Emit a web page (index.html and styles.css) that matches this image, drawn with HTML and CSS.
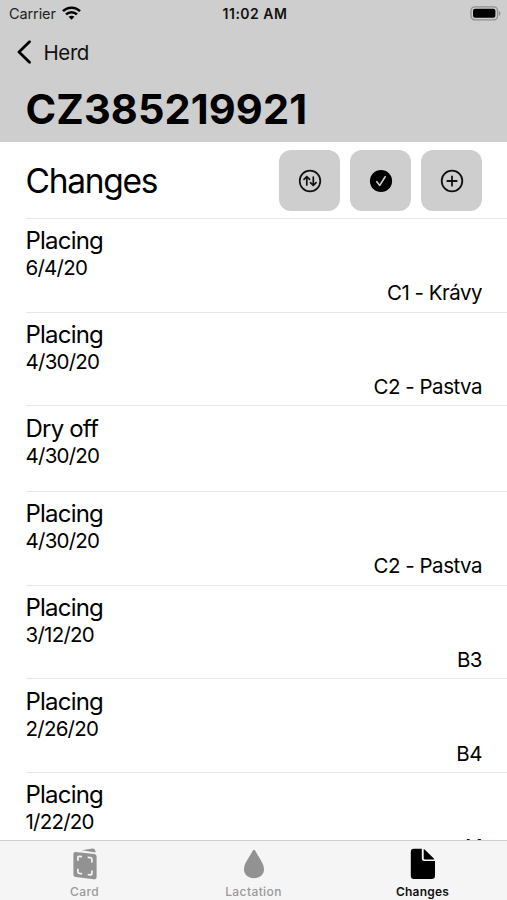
FILE: index.html
```html
<!DOCTYPE html>
<html lang="en">
<head>
    <meta charset="UTF-8">
    <meta name="viewport" content="width=device-width, initial-scale=1.0">
    <title>CZ385219921</title>
    <link rel="stylesheet" href="styles.css">
</head>
<body>
    <header class="header">
        <div class="status-bar">
            <div class="carrier">
                <span>Carrier</span>
                <svg class="wifi" width="19" height="14" viewBox="0 0 19 14" fill="none" stroke="#000" stroke-width="2.5">
                    <path d="M1 5.2C5.6.5 13.4.5 18 5.2"/>
                    <path d="M4 8.4c3.1-3 7.9-3 11 0"/>
                    <path d="M9.5 13.7 6.6 10.8c1.6-1.5 4.2-1.5 5.8 0z" fill="#000" stroke="none"/>
                </svg>
            </div>
            <div class="time">11:02 AM</div>
            <svg class="battery" width="31" height="15" viewBox="0 0 31 15">
                <rect x="1" y=".8" width="26.6" height="13" rx="3.8" fill="none" stroke="#8e8e8e" stroke-width="1.3"/>
                <rect x="3" y="2.8" width="22.4" height="9" rx="2" fill="#000"/>
                <path d="M29 5v4.8c1.9-.8 1.9-4 0-4.8z" fill="#8e8e8e"/>
            </svg>
        </div>
        <a class="back">
            <svg width="15" height="24" viewBox="0 0 15 24" fill="none" stroke="#000" stroke-width="2.8" stroke-linecap="round" stroke-linejoin="round">
                <path d="M12.5 1.8 2 12l10.5 10.2"/>
            </svg>
            <span>Herd</span>
        </a>
        <h1>CZ385219921</h1>
    </header>

    <main class="content">
        <div class="toolbar">
            <h2>Changes</h2>
            <div class="actions">
                <button class="action">
                    <svg width="24" height="24" viewBox="0 0 24 24" fill="none" stroke="#111" stroke-width="1.7" stroke-linecap="round" stroke-linejoin="round">
                        <circle cx="12" cy="12" r="10.3"/>
                        <path d="M8.8 16V7.8M6 10.3l2.8-2.8 2.8 2.8"/>
                        <path d="M15.3 8v8.2M12.5 13.7l2.8 2.8 2.8-2.8"/>
                    </svg>
                </button>
                <button class="action">
                    <svg width="24" height="24" viewBox="0 0 24 24" fill="none">
                        <circle cx="12" cy="12" r="11.1" fill="#000"/>
                        <path d="M7.8 12.7l3 3.7 5.4-8.6" stroke="#cecece" stroke-width="1.6" stroke-linecap="round" stroke-linejoin="round"/>
                    </svg>
                </button>
                <button class="action">
                    <svg width="24" height="24" viewBox="0 0 24 24" fill="none" stroke="#111" stroke-width="1.8" stroke-linecap="round">
                        <circle cx="12" cy="12" r="10.3"/>
                        <path d="M12 7.3v9.4M7.3 12h9.4"/>
                    </svg>
                </button>
            </div>
        </div>

        <div class="change">
            <div class="name">Placing</div>
            <div class="date">6/4/20</div>
            <div class="place">C1 - Krávy</div>
        </div>
        <div class="change">
            <div class="name">Placing</div>
            <div class="date">4/30/20</div>
            <div class="place">C2 - Pastva</div>
        </div>
        <div class="change short">
            <div class="name">Dry off</div>
            <div class="date">4/30/20</div>
        </div>
        <div class="change">
            <div class="name">Placing</div>
            <div class="date">4/30/20</div>
            <div class="place">C2 - Pastva</div>
        </div>
        <div class="change">
            <div class="name">Placing</div>
            <div class="date">3/12/20</div>
            <div class="place">B3</div>
        </div>
        <div class="change">
            <div class="name">Placing</div>
            <div class="date">2/26/20</div>
            <div class="place">B4</div>
        </div>
        <div class="change">
            <div class="name">Placing</div>
            <div class="date">1/22/20</div>
            <div class="place">A1</div>
        </div>
    </main>

    <nav class="tabs">
        <a class="tab">
            <svg width="26" height="32" viewBox="0 0 26 32">
                <path d="M10 2.3 20.5.5c1.6-.2 2.6.8 2.8 2.2l.3 1.9z" fill="#929292"/>
                <path d="M3.8 4 22 6.1c1.6.2 2.6 1.2 2.6 2.8v19.8c0 2-1.2 2.9-3 2.6L4 29c-1.7-.3-2.6-1.2-2.6-2.8V6.2C1.4 4.6 2.3 3.8 3.8 4z" fill="#929292"/>
                <path d="M5.9 12.8V9.7c0-1 .5-1.5 1.5-1.4l2.6.3M15.7 9.3l2.6.3c1 .1 1.6.8 1.6 1.8v3.2M5.9 20.8v2.9c0 1 .5 1.5 1.5 1.7l2.6.4M15.7 26.5l2.6.3c1 .1 1.6-.4 1.6-1.4v-3" fill="none" stroke="#f5f5f5" stroke-width="1.7"/>
            </svg>
            <span>Card</span>
        </a>
        <a class="tab">
            <svg width="22" height="32" viewBox="0 0 22 32">
                <path d="M11 1.8c.5 0 .8.3 1.1.8C15.2 8.7 21 15.3 21 21.2c0 5.4-4.3 9-10 9s-10-3.600-10-9C1 15.3 6.8 8.7 9.9 2.6c.3-.5.6-.8 1.1-.8z" fill="#929292"/>
            </svg>
            <span>Lactation</span>
        </a>
        <a class="tab active">
            <svg width="26" height="32" viewBox="0 0 26 32">
                <path d="M4 .7h7.800v9.800c0 1.500.9 2.400 2.400 2.400H25v14.800c0 2.200-1.100 3.300-3.300 3.300H4C1.800 31 .8 29.900.8 27.700V4C.8 1.800 1.800.7 4 .7z"/>
                <path d="M13.700 1c.6.200 1.100.6 1.700 1.200l7.700 7.600c.6.600 1 1 1.300 1.600H14.800c-.8 0-1.100-.4-1.100-1.100z"/>
            </svg>
            <span>Changes</span>
        </a>
    </nav>
</body>
</html>
```

FILE: styles.css
```css
* {
    box-sizing: border-box;
}
body {
    margin: 0;
    height: 900px;
    display: flex;
    flex-direction: column;
    overflow: hidden;
    background-color: #fff;
    color: #000;
    font-family: Inter, "Liberation Sans", sans-serif;
}
.header {
    flex: none;
    height: 142px;
    background-color: #cecece;
}
.status-bar {
    height: 28px;
    padding: 0 6px 0 9px;
    display: grid;
    grid-template-columns: 1fr auto 1fr;
    align-items: center;
}
.carrier {
    display: flex;
    align-items: center;
    gap: 6px;
    margin-top: -1px;
    font-size: 14.5px;
    letter-spacing: -0.1px;
    color: #222;
}
.wifi {
    margin-top: -2px;
}
.time {
    margin-top: -1px;
    font-size: 14px;
    font-weight: 600;
    letter-spacing: 0.5px;
    color: #111;
}
.battery {
    justify-self: end;
    margin-top: -1px;
}
.back {
    display: flex;
    align-items: center;
    gap: 11.5px;
    height: 48px;
    padding-left: 17px;
    font-size: 20.5px;
    letter-spacing: -0.4px;
    color: #111;
}
h1 {
    margin: 0;
    padding-left: 25.5px;
    font-size: 41.5px;
    line-height: 66px;
    font-weight: 700;
    letter-spacing: 0.1px;
}
.content {
    flex: 1;
    min-height: 0;
    overflow: hidden;
    padding-left: 25.5px;
}
.toolbar {
    display: flex;
    justify-content: space-between;
    height: 76px;
    padding: 8px 25px 0 0;
}
h2 {
    margin: 0;
    font-size: 33.5px;
    line-height: 62px;
    font-weight: 400;
    letter-spacing: -1.3px;
}
.actions {
    display: flex;
    gap: 10px;
}
.action {
    display: flex;
    align-items: center;
    justify-content: center;
    width: 61px;
    height: 61px;
    padding: 0;
    border: none;
    border-radius: 12px;
    background-color: #cecece;
}
.change {
    height: 93.7px;
    padding: 7.3px 25px 0 0;
    border-top: 1px solid #e6e6e6;
}
.change.short {
    height: 85.6px;
}
.name {
    font-size: 24px;
    line-height: 29px;
    letter-spacing: -0.8px;
}
.date {
    font-size: 20.5px;
    line-height: 25px;
    letter-spacing: -0.75px;
}
.place {
    font-size: 20.5px;
    line-height: 25.6px;
    letter-spacing: -0.5px;
    text-align: right;
}
.tabs {
    flex: none;
    display: grid;
    grid-template-columns: repeat(3, 1fr);
    height: 60px;
    border-top: 1px solid #cfcfcf;
    background-color: #f5f5f5;
}
.tab {
    display: flex;
    flex-direction: column;
    align-items: center;
    padding-top: 6.5px;
    font-size: 12px;
    line-height: 23px;
    font-weight: 500;
    letter-spacing: 0.4px;
    color: #999;
}
.tab.active {
    color: #111;
    font-weight: 600;
    letter-spacing: 0.2px;
}
```
